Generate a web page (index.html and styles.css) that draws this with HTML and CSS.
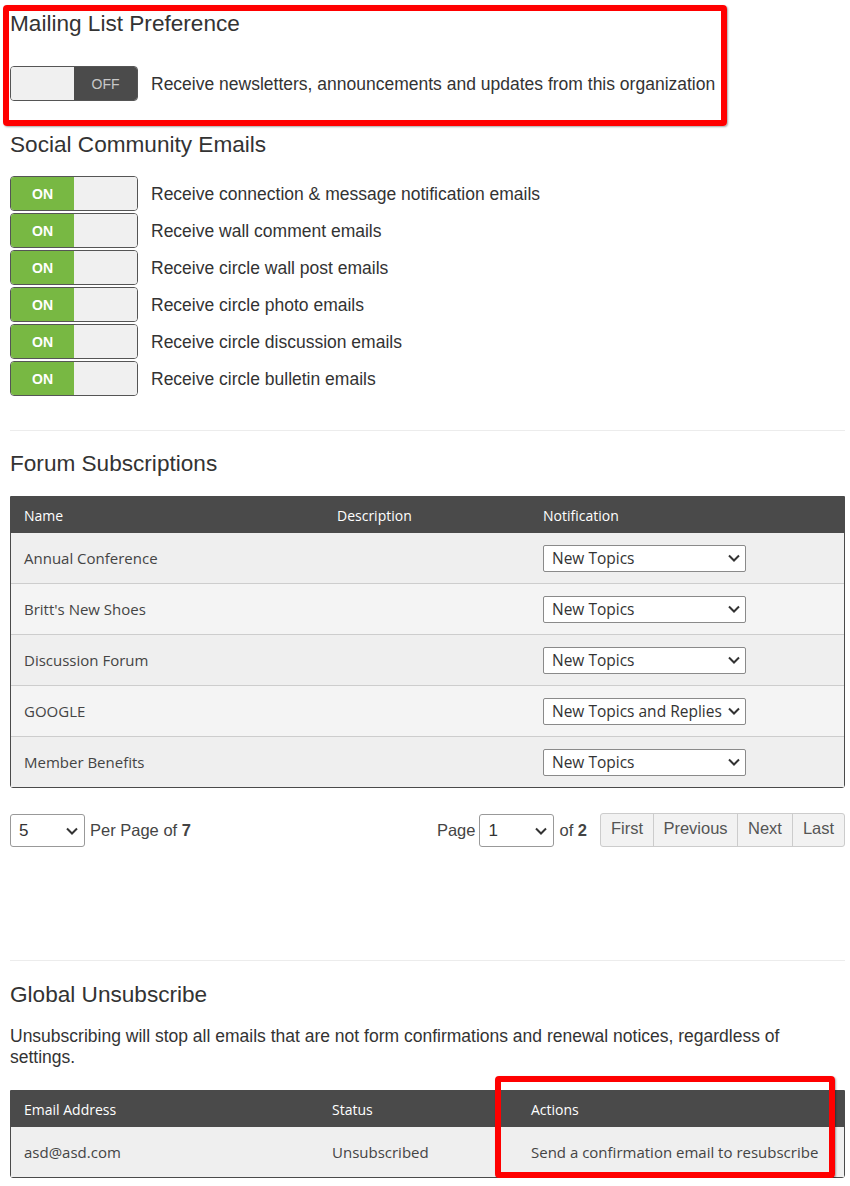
FILE: index.html
```html
<!DOCTYPE html>
<html>
<head>
<meta charset="utf-8">
<link rel="stylesheet" href="styles.css">
</head>
<body>
<div class="page">
  <h2 class="heading first">Mailing List Preference</h2>
  <div class="pref-row mailing">
    <div class="switch off"><span class="half light"></span><span class="half dark">OFF</span></div>
    <span class="pref-label">Receive newsletters, announcements and updates from this organization</span>
  </div>

  <h2 class="heading social">Social Community Emails</h2>
  <div class="toggle-list">
    <div class="pref-row"><div class="switch on"><span class="half green">ON</span><span class="half light"></span></div><span class="pref-label">Receive connection &amp; message notification emails</span></div>
    <div class="pref-row"><div class="switch on"><span class="half green">ON</span><span class="half light"></span></div><span class="pref-label">Receive wall comment emails</span></div>
    <div class="pref-row"><div class="switch on"><span class="half green">ON</span><span class="half light"></span></div><span class="pref-label">Receive circle wall post emails</span></div>
    <div class="pref-row"><div class="switch on"><span class="half green">ON</span><span class="half light"></span></div><span class="pref-label">Receive circle photo emails</span></div>
    <div class="pref-row"><div class="switch on"><span class="half green">ON</span><span class="half light"></span></div><span class="pref-label">Receive circle discussion emails</span></div>
    <div class="pref-row"><div class="switch on"><span class="half green">ON</span><span class="half light"></span></div><span class="pref-label">Receive circle bulletin emails</span></div>
  </div>

  <div class="divider sep1"></div>

  <h2 class="heading forum">Forum Subscriptions</h2>
  <table class="grid forum-table">
    <colgroup><col class="c-name"><col class="c-desc"><col></colgroup>
    <thead><tr><th>Name</th><th>Description</th><th>Notification</th></tr></thead>
    <tbody>
      <tr><td>Annual Conference</td><td></td><td><div class="select tsel"><span>New Topics</span><svg width="12" height="8" viewBox="0 0 12 8"><path d="M1 1.5 L6 6.5 L11 1.5" fill="none" stroke="#333" stroke-width="2"/></svg></div></td></tr>
      <tr><td>Britt's New Shoes</td><td></td><td><div class="select tsel"><span>New Topics</span><svg width="12" height="8" viewBox="0 0 12 8"><path d="M1 1.5 L6 6.5 L11 1.5" fill="none" stroke="#333" stroke-width="2"/></svg></div></td></tr>
      <tr><td>Discussion Forum</td><td></td><td><div class="select tsel"><span>New Topics</span><svg width="12" height="8" viewBox="0 0 12 8"><path d="M1 1.5 L6 6.5 L11 1.5" fill="none" stroke="#333" stroke-width="2"/></svg></div></td></tr>
      <tr><td>GOOGLE</td><td></td><td><div class="select tsel"><span>New Topics and Replies</span><svg width="12" height="8" viewBox="0 0 12 8"><path d="M1 1.5 L6 6.5 L11 1.5" fill="none" stroke="#333" stroke-width="2"/></svg></div></td></tr>
      <tr><td>Member Benefits</td><td></td><td><div class="select tsel"><span>New Topics</span><svg width="12" height="8" viewBox="0 0 12 8"><path d="M1 1.5 L6 6.5 L11 1.5" fill="none" stroke="#333" stroke-width="2"/></svg></div></td></tr>
    </tbody>
  </table>

  <div class="pager">
    <div class="pager-left">
      <div class="select psel"><span>5</span><svg width="12" height="8" viewBox="0 0 12 8"><path d="M1 1.5 L6 6.5 L11 1.5" fill="none" stroke="#333" stroke-width="2"/></svg></div>
      <span class="ptext">Per Page of <b>7</b></span>
    </div>
    <div class="pager-right">
      <span class="ptext">Page</span>
      <div class="select psel"><span>1</span><svg width="12" height="8" viewBox="0 0 12 8"><path d="M1 1.5 L6 6.5 L11 1.5" fill="none" stroke="#333" stroke-width="2"/></svg></div>
      <span class="ptext">of <b>2</b></span>
      <div class="btn-group">
        <span class="btn b-first">First</span><span class="btn b-prev">Previous</span><span class="btn b-next">Next</span><span class="btn b-last">Last</span>
      </div>
    </div>
  </div>

  <div class="divider sep2"></div>

  <h2 class="heading global">Global Unsubscribe</h2>
  <p class="note">Unsubscribing will stop all emails that are not form confirmations and renewal notices, regardless of settings.</p>
  <table class="grid unsub-table">
    <colgroup><col class="c-email"><col class="c-status"><col></colgroup>
    <thead><tr><th>Email Address</th><th>Status</th><th>Actions</th></tr></thead>
    <tbody>
      <tr><td>asd@asd.com</td><td>Unsubscribed</td><td>Send a confirmation email to resubscribe</td></tr>
    </tbody>
  </table>

  <div class="annot annot-top"></div>
  <div class="annot annot-bottom"></div>
</div>
</body>
</html>
```

FILE: styles.css
```css
html, body {
  margin: 0;
  padding: 0;
  background: #ffffff;
}

.page {
  position: relative;
  padding: 11px 5px 0 10px;
  font-family: "Liberation Sans", Arial, sans-serif;
  color: #333;
}

.heading {
  margin: 0;
  font-size: 22.6px;
  line-height: 26px;
  font-weight: normal;
  color: #333;
}

.heading.social { margin-top: 31px; }
.heading.forum { margin-top: 20px; }
.heading.global { margin-top: 21px; }

.pref-row {
  display: flex;
  align-items: center;
  height: 35px;
}

.pref-row.mailing { margin-top: 29px; }

.pref-label {
  margin-left: 13px;
  padding-top: 1px;
  font-size: 17.5px;
  color: #333;
}

.toggle-list {
  margin-top: 18px;
  display: flex;
  flex-direction: column;
  gap: 2px;
}

.switch {
  box-sizing: border-box;
  width: 128px;
  height: 35px;
  border: 1px solid #555;
  border-radius: 4px;
  overflow: hidden;
  display: flex;
  flex: none;
}

.switch .half {
  flex: 1;
  display: flex;
  align-items: center;
  justify-content: center;
  font-size: 14px;
}

.switch .light { background: #f0f0f0; }
.switch .dark { background: #4b4b4b; color: #c8c8c8; }
.switch .green { background: #78b843; color: #fff; font-weight: bold; }

.divider {
  height: 1px;
  background: #ececec;
}
.divider.sep1 { margin-top: 34px; }
.divider.sep2 { margin-top: 113px; }

.grid {
  width: 835px;
  table-layout: fixed;
  border-collapse: separate;
  border-spacing: 0;
  border: 1px solid #4a4a4a;
  border-radius: 0 0 3px 3px;
  font-family: "Open Sans", "Segoe UI", sans-serif;
  font-size: 15px;
  color: #444;
}

.forum-table { margin-top: 19px; }
.unsub-table { margin-top: 22px; }

.c-name { width: 312px; }
.c-desc { width: 206px; }
.c-email { width: 307px; }
.c-status { width: 199px; }

.grid th {
  background: #4a4a4a;
  color: #fff;
  font-weight: normal;
  font-size: 14px;
  text-align: left;
  height: 36px;
  padding: 0 13px;
  vertical-align: middle;
}

.grid th:nth-child(2), .grid td:nth-child(2) { padding-left: 14px; }
.grid th:nth-child(3), .grid td:nth-child(3) { padding-left: 14px; }

.grid td {
  height: 50px;
  padding: 0 13px;
  vertical-align: middle;
  border-bottom: 1px solid #cdcdcd;
  background: #efefef;
}

.grid tbody tr:nth-child(even) td { background: #f4f4f4; }
.grid tbody tr:last-child td { border-bottom: none; height: 50px; }

.select {
  box-sizing: border-box;
  display: flex;
  align-items: center;
  justify-content: space-between;
  background: #fff;
  border: 1px solid #8a8a8a;
  color: #333;
  white-space: nowrap;
}

.tsel {
  width: 203px;
  height: 27px;
  border-radius: 2px;
  padding: 0 5px 0 8px;
  font-family: "Open Sans", "Segoe UI", sans-serif;
  font-size: 15.5px;
}

.tsel svg { flex: none; margin-left: 2px; }

.pager {
  margin-top: 24px;
  display: flex;
  align-items: center;
  justify-content: space-between;
}

.pager-left, .pager-right {
  display: flex;
  align-items: center;
}

.psel {
  width: 75px;
  height: 33px;
  border-radius: 3px;
  padding: 0 6px 0 8px;
  border-color: #999;
  font-size: 17px;
  margin-top: 2px;
}

.ptext {
  font-size: 16.5px;
  color: #444;
  margin: 2px 4px 0;
}

.pager-left .ptext { margin-left: 5px; }
.pager-right .ptext:last-of-type { margin-left: 5px; margin-right: 13px; }

.btn-group {
  display: flex;
  height: 34px;
  border: 1px solid #ccc;
  border-radius: 3px;
  background: #f2f2f2;
  box-sizing: border-box;
}

.btn {
  display: flex;
  align-items: center;
  justify-content: center;
  font-size: 16.5px;
  color: #555;
  padding-bottom: 3px;
  box-sizing: border-box;
  border-left: 1px solid #ccc;
}
.btn.b-first { width: 52px; border-left: none; }
.btn.b-prev { width: 84px; }
.btn.b-next { width: 55px; }
.btn.b-last { width: 52px; }

.note {
  margin: 18px 0 0;
  font-size: 17.5px;
  line-height: 21px;
  color: #333;
}

.annot {
  position: absolute;
  box-sizing: border-box;
  border: 6px solid #ff0000;
  border-radius: 4px;
  box-shadow: 1px 1px 2px rgba(0, 0, 0, 0.35);
  pointer-events: none;
}

.annot-top {
  left: 3px;
  top: 5px;
  width: 724px;
  height: 121px;
}

.annot-bottom {
  left: 495px;
  top: 1076px;
  width: 340px;
  height: 102px;
}
```
